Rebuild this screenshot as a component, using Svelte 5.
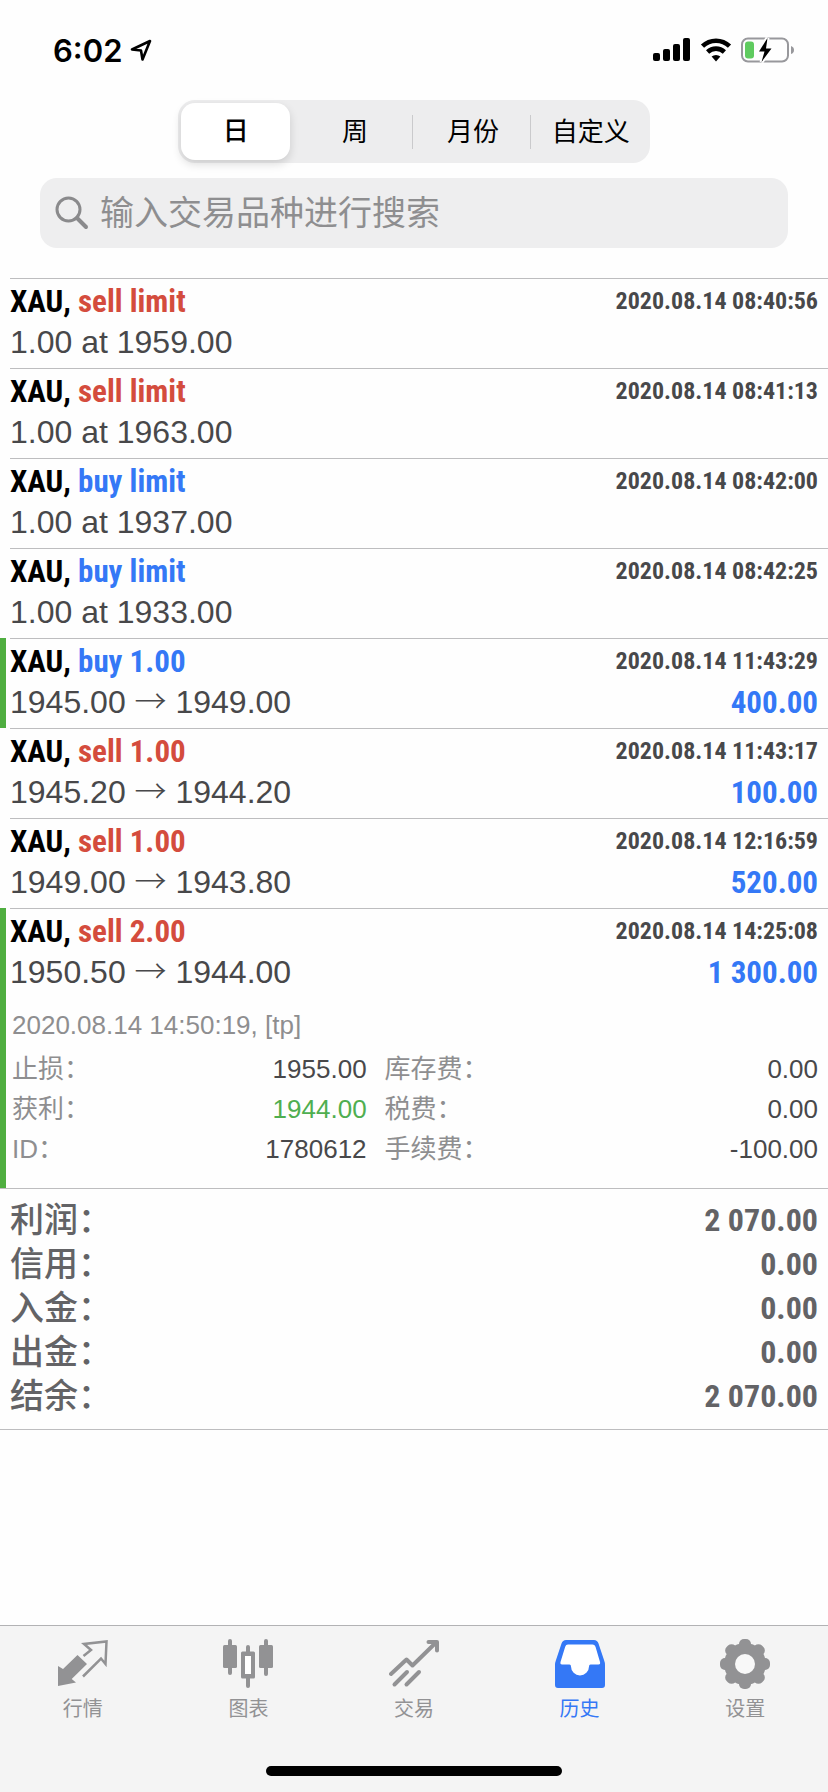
<script lang="ts">
	type Deal = {
		id: number;
		symbol: string;
		side: 'buy' | 'sell';
		kind: string;
		time: string;
		volume?: string;
		open?: string;
		close?: string;
		profit?: string;
		marked?: boolean;
		expanded?: boolean;
	};

	const periods = ['日', '周', '月份', '自定义'];

	const deals: Deal[] = [
		{ id: 1, symbol: 'XAU', side: 'sell', kind: 'limit', time: '2020.08.14 08:40:56', volume: '1.00 at 1959.00' },
		{ id: 2, symbol: 'XAU', side: 'sell', kind: 'limit', time: '2020.08.14 08:41:13', volume: '1.00 at 1963.00' },
		{ id: 3, symbol: 'XAU', side: 'buy', kind: 'limit', time: '2020.08.14 08:42:00', volume: '1.00 at 1937.00' },
		{ id: 4, symbol: 'XAU', side: 'buy', kind: 'limit', time: '2020.08.14 08:42:25', volume: '1.00 at 1933.00' },
		{ id: 5, symbol: 'XAU', side: 'buy', kind: '1.00', time: '2020.08.14 11:43:29', open: '1945.00', close: '1949.00', profit: '400.00', marked: true },
		{ id: 6, symbol: 'XAU', side: 'sell', kind: '1.00', time: '2020.08.14 11:43:17', open: '1945.20', close: '1944.20', profit: '100.00' },
		{ id: 7, symbol: 'XAU', side: 'sell', kind: '1.00', time: '2020.08.14 12:16:59', open: '1949.00', close: '1943.80', profit: '520.00' },
		{ id: 8, symbol: 'XAU', side: 'sell', kind: '2.00', time: '2020.08.14 14:25:08', open: '1950.50', close: '1944.00', profit: '1 300.00', marked: true, expanded: true },
	];

	const details = [
		{ label: '止损：', value: '1955.00' },
		{ label: '库存费：', value: '0.00' },
		{ label: '获利：', value: '1944.00', hit: true },
		{ label: '税费：', value: '0.00' },
		{ label: 'ID：', value: '1780612' },
		{ label: '手续费：', value: '-100.00' },
	];

	const totals = [
		{ label: '利润：', value: '2 070.00' },
		{ label: '信用：', value: '0.00' },
		{ label: '入金：', value: '0.00' },
		{ label: '出金：', value: '0.00' },
		{ label: '结余：', value: '2 070.00' },
	];

	const tabs = [
		{ id: 'quotes', label: '行情' },
		{ id: 'charts', label: '图表' },
		{ id: 'trade', label: '交易' },
		{ id: 'history', label: '历史' },
		{ id: 'settings', label: '设置' },
	];

	let period = $state('日');
	let query = $state('');
	let activeTab = $state('history');
</script>

<div class="screen">
	<div class="status-bar">
		<div class="clock">
			<span>6:02</span>
			<svg width="22" height="22" viewBox="0 0 22 22" aria-hidden="true">
				<path d="M2 10.5 20 2 12.5 20.5 11 11.5Z" fill="none" stroke="#000" stroke-width="2.6" stroke-linejoin="round" />
			</svg>
		</div>
		<div class="indicators">
			<svg width="38" height="24" viewBox="0 0 38 24" aria-hidden="true">
				<rect x="0" y="15" width="7" height="8" rx="2" />
				<rect x="10" y="11" width="7" height="12" rx="2" />
				<rect x="20" y="6" width="7" height="17" rx="2" />
				<rect x="30" y="0" width="7" height="23" rx="2" />
			</svg>
			<svg width="32" height="24" viewBox="0 0 32 24" aria-hidden="true">
				<path d="M2.5 8.2a19.5 19.5 0 0 1 27 0" fill="none" stroke="#000" stroke-width="4.6" />
				<path d="M7.6 14a12.2 12.2 0 0 1 16.8 0" fill="none" stroke="#000" stroke-width="4.6" />
				<path d="M16 23.5 11.6 18.6a6.6 6.6 0 0 1 8.8 0Z" />
			</svg>
			<svg width="54" height="26" viewBox="0 0 54 26" aria-hidden="true">
				<rect x="1" y="1.5" width="46" height="23" rx="6" fill="none" stroke="#98989c" stroke-width="2" />
				<path d="M50 9v8q3-1 3-4t-3-4Z" fill="#98989c" />
				<rect x="4" y="4.5" width="9" height="17" rx="3" fill="#5fcb5f" />
				<path d="M26.5 1 18 14.5h5.5L20.500 25l10-13.500H25Z" fill="#000" stroke="#fff" stroke-width="4" paint-order="stroke" />
			</svg>
		</div>
	</div>

	<header>
		<div class="segments" role="group" aria-label="周期">
			{#each periods as p (p)}
				<button type="button" class:selected={period === p} aria-pressed={period === p} onclick={() => (period = p)}>
					<span>{p}</span>
				</button>
			{/each}
		</div>
		<label class="search">
			<svg width="34" height="34" viewBox="0 0 34 34" aria-hidden="true">
				<circle cx="13.5" cy="13.5" r="11.5" fill="none" stroke="#8a8a8c" stroke-width="3" />
				<path d="m22 22 9 9" stroke="#8a8a8c" stroke-width="4" stroke-linecap="round" />
			</svg>
			<input type="search" bind:value={query} placeholder="输入交易品种进行搜索" aria-label="输入交易品种进行搜索" />
		</label>
	</header>

	<main>
		<ul class="deals">
			{#each deals as deal (deal.id)}
				<li class:marked={deal.marked}>
					<div class="deal">
						<div class="line title">
							<strong>{deal.symbol}, <span class={deal.side}>{deal.side} {deal.kind}</span></strong>
							<time>{deal.time}</time>
						</div>
						<div class="line prices">
							{#if deal.open}
								<span>{deal.open} <span class="arrow">→</span> {deal.close}</span>
								<strong class="profit">{deal.profit}</strong>
							{:else}
								<span>{deal.volume}</span>
							{/if}
						</div>
						{#if deal.expanded}
							<div class="more">
								<p>2020.08.14 14:50:19, [tp]</p>
								<dl class="details">
									{#each details as d (d.label)}
										<div>
											<dt>{d.label}</dt>
											<dd class:hit={d.hit}>{d.value}</dd>
										</div>
									{/each}
								</dl>
							</div>
						{/if}
					</div>
				</li>
			{/each}
		</ul>

		<dl class="totals">
			{#each totals as t (t.label)}
				<div>
					<dt>{t.label}</dt>
					<dd>{t.value}</dd>
				</div>
			{/each}
		</dl>
	</main>

	<footer>
		<nav>
			{#each tabs as tab (tab.id)}
				<button
					type="button"
					class:active={activeTab === tab.id}
					aria-current={activeTab === tab.id ? 'page' : undefined}
					onclick={() => (activeTab = tab.id)}
				>
					<svg width="50" height="52" viewBox="0 0 50 52" aria-hidden="true">
						{#if tab.id === 'quotes'}
							<path d="M0 28 5 31 19.5 17 29 26 13.7 41 18 44.5 0 48Z" fill="currentColor" />
							<path d="m25.5 18 7.5-6-7-6 22.5-2.5L47.5 26 43 20.5 25 38.5" fill="none" stroke="currentColor" stroke-width="2.5" />
						{:else if tab.id === 'charts'}
							<g fill="currentColor">
								<rect x="0" y="7" width="14" height="23" rx="1.5" />
								<rect x="5" y="1" width="4" height="36" rx="2" />
								<rect x="23" y="7" width="4" height="43" rx="2" />
								<rect x="18" y="13.5" width="14" height="27" rx="1.5" />
								<rect x="36" y="7" width="14" height="23" rx="1.5" />
								<rect x="41" y="1" width="4" height="37" rx="2" />
							</g>
							<rect x="22" y="18" width="6" height="18" fill="#fff" />
						{:else if tab.id === 'trade'}
							<g fill="none" stroke="currentColor" stroke-width="4" stroke-linecap="round" stroke-linejoin="round">
								<path d="M2 36 17.5 21.5 23.5 27.5 47 4.5" />
								<path d="M39.5 4H48v8.5" />
								<path d="M5.5 46.5 18 34M17.5 46.5 30 34" />
							</g>
						{:else if tab.id === 'history'}
							<path d="M0 27q0-2.500 1-5L6.500 5.500Q7.700 2 11 2h28q3.300 0 4.500 3.500L49 22q1 2.500 1 5v20q0 3-3 3H3q-3 0-3-3Z" fill="currentColor" />
							<path d="M13 6.500h24.500q2.200 0 3 2.200L45 24q.6 2.500-1.500 2.500h-8q-1.500 0-1.500 2a9 9 0 0 1-18 0q0-2-1.500-2H7q-2 0-1.500-2.500L10.200 8.700q.6-2.200 2.800-2.200Z" fill="#fff" />
						{:else}
							<g fill="currentColor">
								<circle cx="25" cy="26" r="21" />
								{#each [0, 45, 90, 135] as angle}
									<rect x="19" y="1" width="12" height="50" rx="5" transform="rotate({angle} 25 26)" />
								{/each}
							</g>
							<circle cx="25" cy="26" r="10" fill="#f8f8f8" />
						{/if}
					</svg>
					<span>{tab.label}</span>
				</button>
			{/each}
		</nav>
		<div class="home-indicator"></div>
	</footer>
</div>

<style>
	:global(body) {
		margin: 0;
		background: #fefefe;
	}

	.screen {
		--line: #bdbdbf;
		--blue: #3478f6;
		--grey: #8e8e90;
		--condensed: 'Liberation Sans Narrow', 'Roboto Condensed', 'Liberation Sans', 'Noto Sans CJK SC', sans-serif;
		display: flex;
		flex-direction: column;
		min-height: 100vh;
		font-family: 'Liberation Sans', 'Noto Sans CJK SC', sans-serif;
		font-size: 26px;
		color: #48484a;
	}

	ul,
	dl,
	dd,
	p {
		margin: 0;
		padding: 0;
		list-style: none;
	}

	button {
		border: 0;
		padding: 0;
		background: none;
		font: inherit;
		color: inherit;
	}

	.status-bar {
		display: flex;
		justify-content: space-between;
		align-items: center;
		height: 100px;
		padding: 0 33px 0 53px;
	}

	.clock,
	.indicators {
		display: flex;
		align-items: center;
		gap: 9px;
	}

	.clock {
		gap: 8px;
		font-family: Inter, sans-serif;
		font-size: 31px;
		font-weight: 600;
		color: #000;
	}

	header {
		display: flex;
		flex-direction: column;
		gap: 15px;
		padding: 0 40px 30px;
	}

	.segments {
		display: grid;
		grid-template-columns: repeat(4, 1fr);
		align-self: center;
		box-sizing: border-box;
		width: 63%;
		height: 63px;
		border-radius: 17px;
		background: #ededee;
		color: #000;
	}

	.segments button {
		display: flex;
		padding: 3px;
		align-items: center;
	}

	.segments span {
		flex: 1;
		line-height: 34px;
	}

	.segments button:nth-child(n + 3) span {
		box-shadow: -4px 0 0 #ededee, -5px 0 0 #cacacc;
	}

	.segments .selected {
		padding-right: 6px;
		font-weight: 500;
	}

	.segments .selected span {
		line-height: 57px;
		border-radius: 14px;
		background: #fff;
		box-shadow: 0 4px 10px rgb(0 0 0 / 14%);
	}

	.search {
		display: flex;
		align-items: center;
		gap: 11px;
		height: 70px;
		padding: 0 15px;
		border-radius: 17px;
		background: #eeeeef;
	}

	.search input {
		flex: 1;
		min-width: 0;
		border: 0;
		padding: 0;
		outline: none;
		background: none;
		font: inherit;
		font-size: 34px;
		color: #000;
	}

	.search input::placeholder {
		color: var(--grey);
		opacity: 1;
	}

	.deals li {
		border-left: 6px solid transparent;
	}

	.deals li.marked {
		border-left-color: #4fae40;
	}

	.deal {
		margin-left: 4px;
		padding: 2px 10px 5px 0;
		border-top: 1px solid var(--line);
	}

	.line,
	.details div,
	.totals div {
		display: flex;
		justify-content: space-between;
		align-items: center;
	}

	.title {
		height: 40px;
		font-family: var(--condensed);
		font-size: 31px;
		color: #000;
	}

	.title time {
		font-size: 24px;
		font-weight: 700;
		color: #48484a;
	}

	.prices {
		height: 42px;
		font-size: 32px;
	}

	.arrow {
		font-family: 'Noto Sans CJK SC', sans-serif;
		font-weight: 300;
		line-height: 32px;
	}

	.buy,
	.profit {
		color: var(--blue);
	}

	.sell {
		color: #d44c3d;
	}

	.profit {
		font-family: var(--condensed);
		font-size: 31px;
	}

	.more {
		padding: 12px 0 14px 2px;
		line-height: 40px;
	}

	.more p {
		color: var(--grey);
	}

	.details {
		display: grid;
		grid-template-columns: 9fr 11fr;
		column-gap: 18px;
		margin-top: 4px;
	}

	.details div {
		height: 40px;
	}

	.details dt {
		color: var(--grey);
	}

	.details .hit {
		color: #4fae50;
	}

	.totals {
		padding: 9px 10px 11px;
		border-top: 1px solid var(--line);
		border-bottom: 1px solid var(--line);
		font-size: 34px;
		line-height: 44px;
		color: #636366;
	}

	.totals div {
		height: 44px;
	}

	.totals dt {
		font-weight: 500;
	}

	.totals dd {
		font-family: var(--condensed);
		font-size: 32px;
		font-weight: 700;
	}

	footer {
		margin-top: auto;
		border-top: 1px solid #b2b2b4;
		background: #f4f4f4;
	}

	nav {
		display: grid;
		grid-template-columns: repeat(5, 1fr);
		padding-top: 12px;
		font-size: 20px;
		color: #929294;
	}

	nav button {
		display: flex;
		flex-direction: column;
		align-items: center;
		gap: 5px;
		line-height: 28px;
	}

	nav .active {
		color: var(--blue);
	}

	.home-indicator {
		width: 296px;
		height: 10px;
		margin: 43px auto 16px;
		border-radius: 5px;
		background: #000;
	}
</style>
